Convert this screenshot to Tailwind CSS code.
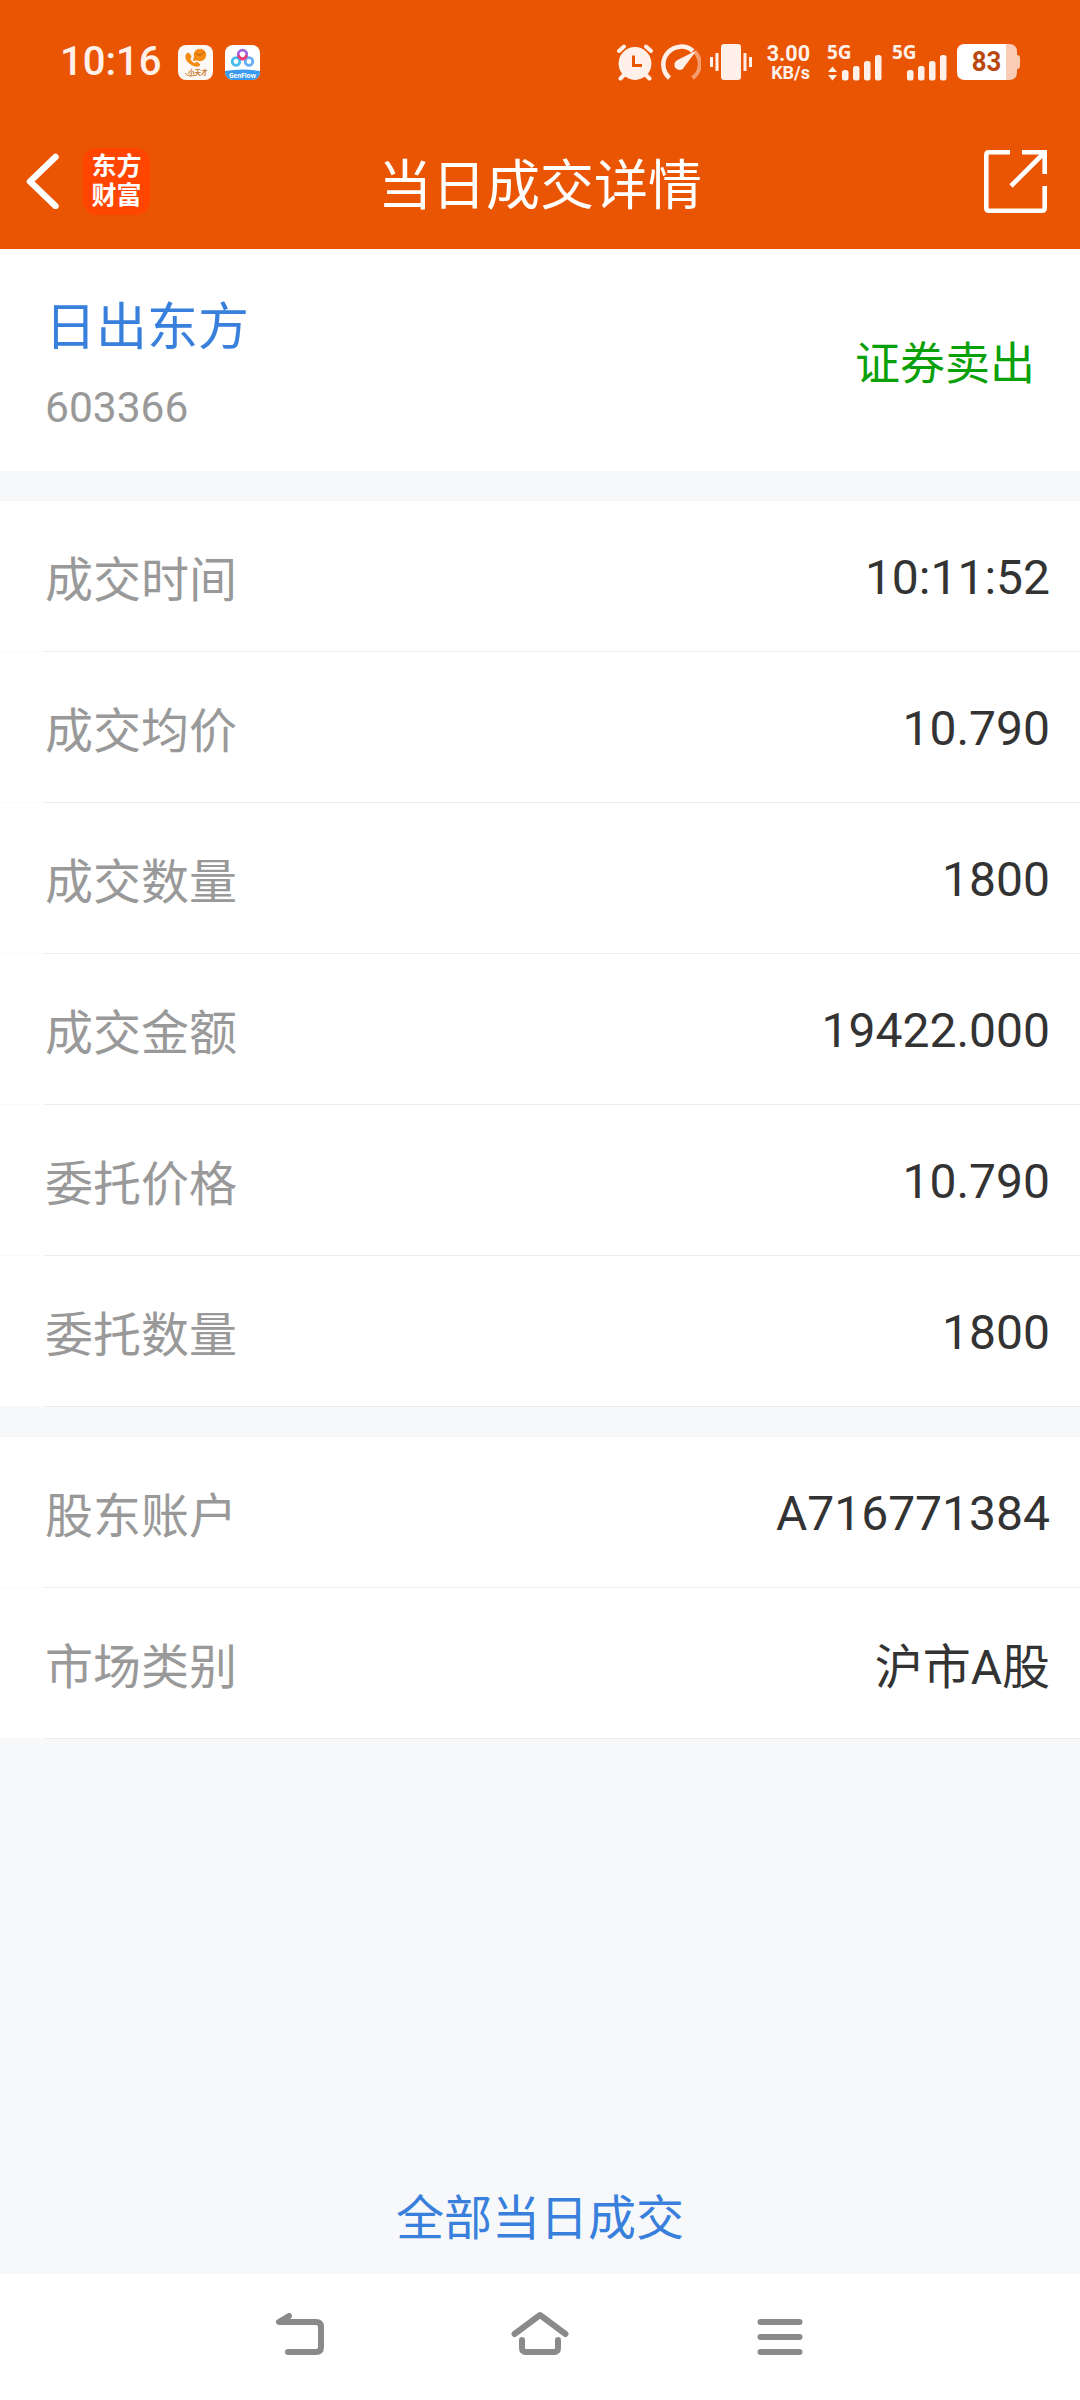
<!DOCTYPE html>
<html lang="zh-CN">
<head>
  <meta charset="UTF-8">
  <meta name="viewport" content="width=device-width, initial-scale=1.0">
  <title>当日成交详情</title>
  <script src="https://cdn.jsdelivr.net/npm/@tailwindcss/browser@4"></script>
</head>
<body class="bg-[#f7f8fa]">
  <div class="w-[1080px] h-[2400px] flex flex-col font-[Roboto,'Noto_Sans_CJK_SC',sans-serif] text-[48px] leading-none text-[#333] overflow-hidden">

    <!-- Header -->
    <header class="h-[249px] shrink-0 bg-[#ea5504] text-white">
      <!-- Status bar -->
      <div class="h-[124px] flex items-center pl-[60px] pr-[60px] text-[#fff1ea]">
        <div class="w-[118px] text-[40px] font-medium">10:16</div>
        <svg class="w-[35px] h-[35px]" viewBox="0 0 35 35">
          <rect width="35" height="35" rx="8" fill="#fbf8f6"/>
          <path d="M9 8c-3 3-1.500 8 3 11 4 3 8 3.500 10 1.500 1-1-2-4-3.500-3.500l-2 1c-1.500-.5-3.500-2.500-4-4l1-2C13.500 10 11 6.500 9 8z" fill="#f68b12"/>
          <circle cx="22" cy="10" r="6.200" fill="#f68b12"/>
          <path d="M16 11l-1 5 5-1z" fill="#f68b12"/>
          <path d="M18 8q4 5 8-1" fill="none" stroke="#b85a08" stroke-width="1"/>
          <path d="M7 28q4 5 10 2" fill="none" stroke="#d98539" stroke-width="1"/>
          <text x="10" y="29.500" font-size="6.500" font-weight="700" font-family="Noto Sans CJK SC" fill="#c9731f">小天才</text>
        </svg>
        <svg class="w-[35px] h-[35px] ml-3" viewBox="0 0 35 35">
          <defs><clipPath id="tile"><rect width="35" height="35" rx="8"/></clipPath></defs>
          <g clip-path="url(#tile)">
            <rect width="35" height="35" fill="#fff"/>
            <path d="M0 26q17.500-3 35 0v9H0z" fill="#3a9af0"/>
            <g fill="none" stroke-width="2.800">
              <circle cx="11" cy="16.500" r="3.800" stroke="#48bdf0"/>
              <circle cx="24" cy="16.500" r="3.800" stroke="#6aaef5"/>
              <circle cx="17.500" cy="9.500" r="4.300" stroke="#a566dc"/>
              <path d="M13.300 10.500q4.200 7 8.400 0" stroke="#ea3f73"/>
            </g>
            <text x="17.500" y="32.500" text-anchor="middle" font-size="6.500" font-weight="700" font-family="Open Sans" fill="#fff" textLength="27">GenFlow</text>
          </g>
        </svg>

        <!-- Alarm -->
        <svg class="w-[38px] h-[38px] ml-auto" viewBox="0 0 38 38">
          <g stroke="#fff1ea" stroke-width="4" stroke-linecap="round">
            <path d="M3 8l5-4.500M35 8l-5-4.500M8 32l-3.500 3.500M30 32l3.500 3.500"/>
          </g>
          <circle cx="19" cy="20.500" r="16.400" fill="#fff1ea"/>
          <path d="M17.500 12.500v10h8.500" fill="none" stroke="#ea5504" stroke-width="3"/>
        </svg>
        <!-- Speed -->
        <svg class="w-[40px] h-[38px] ml-[7px]" viewBox="0 0 40 38">
          <path d="M34 9a17.200 17.200 0 0 1-2.500 26" fill="none" stroke="#f59d70" stroke-width="4"/>
          <path d="M8.500 35A17.200 17.200 0 1 1 32 8" fill="none" stroke="#fff1ea" stroke-width="4.500"/>
          <path d="M35.500 7.500L23.500 23.500a5.200 5.200 0 1 1-7-6.500z" fill="#fff1ea"/>
        </svg>
        <!-- Vibrate -->
        <svg class="w-[42px] h-[36px] ml-[9px]" viewBox="0 0 42 36" fill="#fff1ea">
          <rect x="11" y="0" width="20" height="36" rx="3"/>
          <rect x="0" y="13" width="3" height="10"/>
          <rect x="5.500" y="9" width="3" height="18"/>
          <rect x="33.500" y="9" width="3" height="18"/>
          <rect x="39" y="13" width="3" height="10"/>
        </svg>
        <div class="w-[42px] ml-[16px] pt-[2px] flex flex-col items-end font-bold">
          <span class="text-[21.500px] leading-[19px]">3.00</span>
          <span class="text-[18px] leading-[19px]">KB/s</span>
        </div>
        <!-- Signal, SIM 1 -->
        <svg class="w-[55px] h-[38px] ml-[17px] overflow-visible" viewBox="0 0 55 38" fill="#fff1ea">
          <text x="0" y="15.500" font-size="19" font-weight="700" font-family="Open Sans">5G</text>
          <path d="M1 29h9l-4.500-5.500zM1 32h9l-4.500 5.500z"/>
          <rect x="15" y="27" width="6.500" height="10.500" rx="2.500"/>
          <rect x="26" y="23" width="6.500" height="14.500" rx="2.500"/>
          <rect x="37" y="18" width="6.500" height="19.500" rx="2.500"/>
          <rect x="48" y="12" width="6.500" height="25.500" rx="2.500"/>
        </svg>
        <!-- Signal, SIM 2 -->
        <svg class="w-[55px] h-[38px] ml-[10px] overflow-visible" viewBox="0 0 55 38" fill="#fff1ea">
          <text x="0" y="15.500" font-size="19" font-weight="700" font-family="Open Sans">5G</text>
          <rect x="15" y="27" width="6.500" height="10.500" rx="2.500"/>
          <rect x="26" y="23" width="6.500" height="14.500" rx="2.500"/>
          <rect x="37" y="18" width="6.500" height="19.500" rx="2.500"/>
          <rect x="48" y="12" width="6.500" height="25.500" rx="2.500"/>
        </svg>
        <!-- Battery -->
        <svg class="w-[63px] h-[36px] ml-[10px]" viewBox="0 0 63 36">
          <path d="M49 0h3q8 0 8 8v3q3 0 3 3v8q0 3-3 3v3q0 8-8 8h-3z" fill="#f9ccb5"/>
          <path d="M49 0H8Q0 0 0 8v20q0 8 8 8h41z" fill="#fff"/>
          <text x="29.500" y="27.300" text-anchor="middle" font-size="27" font-weight="700" font-family="Roboto" fill="#b9480f" textLength="29.500" lengthAdjust="spacingAndGlyphs">83</text>
        </svg>
      </div>

      <!-- Title bar -->
      <div class="h-[125px] grid grid-cols-[1fr_auto_1fr] items-start">
        <div class="flex items-start pl-[25px] pt-6">
          <svg class="w-[34px] h-[56px] mt-[5px]" viewBox="0 0 34 56">
            <path d="M30.500 4L5 28.500 30.500 53" fill="none" stroke="#fff" stroke-width="6.500" stroke-linecap="round" stroke-linejoin="round"/>
          </svg>
          <div class="w-[67px] h-[67px] ml-[24px] rounded-[14px] bg-[#ff4500] flex flex-col items-center pt-[4px] text-[25px] font-bold leading-[29px]">
            <span>东方</span>
            <span>财富</span>
          </div>
        </div>
        <h1 class="text-[54px] pt-[36px]">当日成交详情</h1>
        <div class="flex justify-end pr-[33px] pt-[26px]">
          <svg class="w-[63px] h-[63px]" viewBox="0 0 63 63" fill="none" stroke="#fff" stroke-width="4.600">
            <path d="M26 2.300H5Q2.300 2.300 2.300 5v53q0 2.700 2.700 2.700h53q2.700 0 2.700-2.700V36M38 2.300h22.700V24M60 3L27 36"/>
          </svg>
        </div>
      </div>
    </header>

    <!-- Stock -->
    <section class="h-[222px] shrink-0 bg-white px-[45px] flex justify-between">
      <div class="flex flex-col">
        <span class="text-[51px] text-[#3880dc] pt-[53px]">日出东方</span>
        <span class="text-[42.500px] text-[#999] pt-[34px]">603366</span>
      </div>
      <span class="text-[45px] text-[#09a009] pt-[93px]">证券卖出</span>
    </section>

    <!-- Trade info -->
    <section class="mt-[30px] shrink-0">
      <div class="h-[151px] pr-[30px] bg-white flex">
        <div class="w-[45px] border-b border-[#fafafa]"></div>
        <div class="flex-1 -mr-[30px] pr-[30px] border-b border-[#ebebeb] flex justify-between">
          <span class="pt-[56px] text-[#999]">成交时间</span>
          <span class="pt-[53px]">10:11:52</span>
        </div>
      </div>
      <div class="h-[151px] pr-[30px] bg-white flex">
        <div class="w-[45px] border-b border-[#fafafa]"></div>
        <div class="flex-1 -mr-[30px] pr-[30px] border-b border-[#ebebeb] flex justify-between">
          <span class="pt-[56px] text-[#999]">成交均价</span>
          <span class="pt-[53px]">10.790</span>
        </div>
      </div>
      <div class="h-[151px] pr-[30px] bg-white flex">
        <div class="w-[45px] border-b border-[#fafafa]"></div>
        <div class="flex-1 -mr-[30px] pr-[30px] border-b border-[#ebebeb] flex justify-between">
          <span class="pt-[56px] text-[#999]">成交数量</span>
          <span class="pt-[53px]">1800</span>
        </div>
      </div>
      <div class="h-[151px] pr-[30px] bg-white flex">
        <div class="w-[45px] border-b border-[#fafafa]"></div>
        <div class="flex-1 -mr-[30px] pr-[30px] border-b border-[#ebebeb] flex justify-between">
          <span class="pt-[56px] text-[#999]">成交金额</span>
          <span class="pt-[53px]">19422.000</span>
        </div>
      </div>
      <div class="h-[151px] pr-[30px] bg-white flex">
        <div class="w-[45px] border-b border-[#fafafa]"></div>
        <div class="flex-1 -mr-[30px] pr-[30px] border-b border-[#ebebeb] flex justify-between">
          <span class="pt-[56px] text-[#999]">委托价格</span>
          <span class="pt-[53px]">10.790</span>
        </div>
      </div>
      <div class="h-[151px] pr-[30px] bg-white flex">
        <div class="w-[45px] border-b border-[#f7f8fa]"></div>
        <div class="flex-1 -mr-[30px] pr-[30px] border-b border-[#ebebeb] flex justify-between">
          <span class="pt-[56px] text-[#999]">委托数量</span>
          <span class="pt-[53px]">1800</span>
        </div>
      </div>
    </section>

    <!-- Account info -->
    <section class="mt-[30px] shrink-0">
      <div class="h-[151px] pr-[30px] bg-white flex">
        <div class="w-[45px] border-b border-[#fafafa]"></div>
        <div class="flex-1 -mr-[30px] pr-[30px] border-b border-[#ebebeb] flex justify-between">
          <span class="pt-[56px] text-[#999]">股东账户</span>
          <span class="pt-[53px]">A716771384</span>
        </div>
      </div>
      <div class="h-[151px] pr-[30px] bg-white flex">
        <div class="w-[45px] border-b border-[#f7f8fa]"></div>
        <div class="flex-1 -mr-[30px] pr-[30px] border-b border-[#ebebeb] flex justify-between">
          <span class="pt-[56px] text-[#999]">市场类别</span>
          <span class="pt-[56px]">沪市A股</span>
        </div>
      </div>
    </section>

    <a class="mt-auto pb-[31px] text-center text-[#3880dc]">全部当日成交</a>

    <!-- Navigation bar -->
    <nav class="h-[126px] shrink-0 bg-white flex items-start justify-center gap-[186px] pt-[36px]">
      <svg class="w-[50px] h-[48px]" viewBox="0 0 50 48" fill="none" stroke="#8a8a8a" stroke-width="6" stroke-linecap="round" stroke-linejoin="round">
        <path d="M15 6L5 12h37q5 0 5 5v20q0 5-5 5H14"/>
      </svg>
      <svg class="w-[60px] h-[48px]" viewBox="0 0 60 48" fill="none" stroke="#8a8a8a" stroke-width="6" stroke-linecap="round" stroke-linejoin="round">
        <path d="M4.500 24L30 5l25.500 19M12 30v8q0 4 4 4h28q4 0 4-4v-8"/>
      </svg>
      <svg class="w-[50px] h-[48px]" viewBox="0 0 50 48" fill="none" stroke="#8a8a8a" stroke-width="6" stroke-linecap="round">
        <path d="M4.500 12h39M4.500 27h39M4.500 42h39"/>
      </svg>
    </nav>
  </div>
</body>
</html>
